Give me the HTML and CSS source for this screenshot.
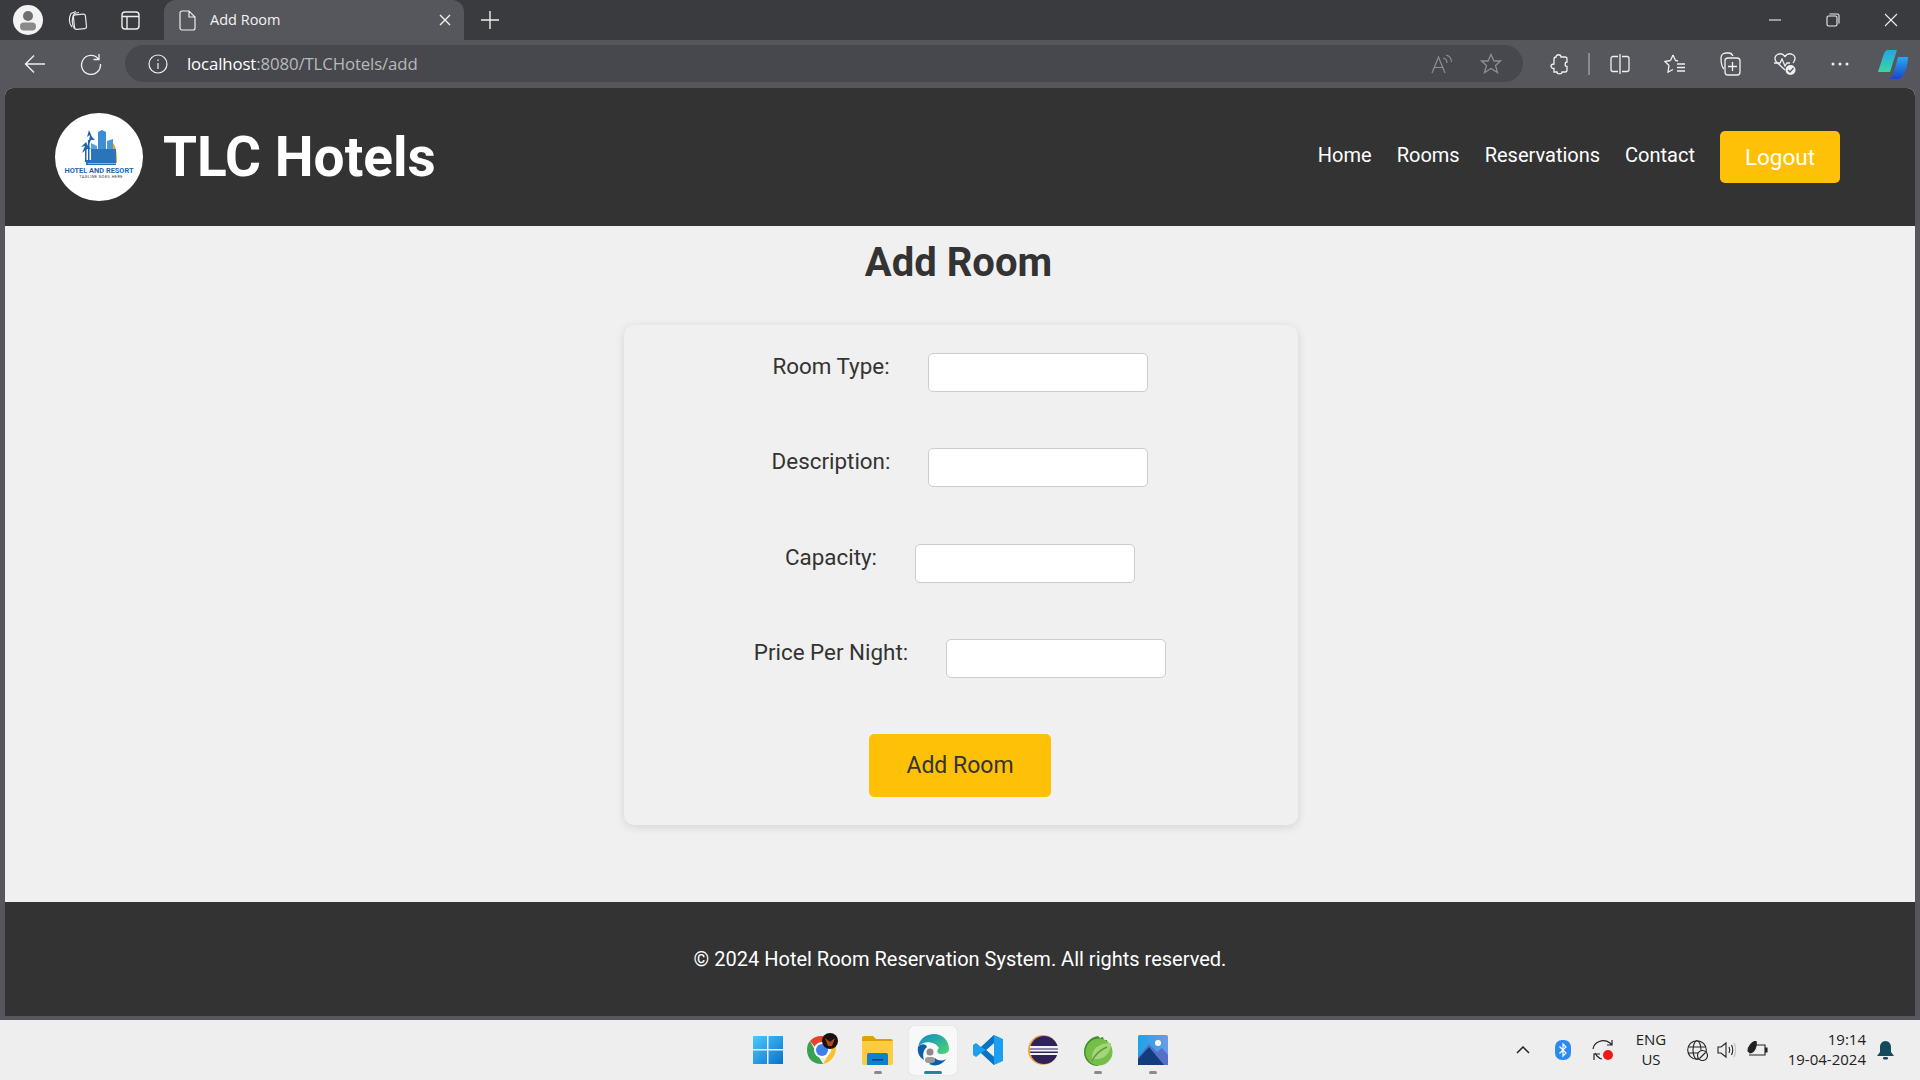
FILE: index.html
```html
<!DOCTYPE html>
<html lang="en">
<head>
<meta charset="utf-8">
<title>Add Room</title>
<link rel="stylesheet" href="styles.css">
</head>
<body>
<div class="tabbar">
  <div class="slot s-profile">
    <svg width="30" height="30" viewBox="0 0 30 30"><circle cx="15" cy="15" r="15" fill="#f3f3f3"/><circle cx="15" cy="11" r="5" fill="#6f6f6f"/><rect x="7" y="17.500" width="16" height="8" rx="4" fill="#8a8a8a"/></svg>
  </div>
  <div class="slot s-work">
    <svg width="22" height="22" viewBox="0 0 22 22" fill="none" stroke="#e6e6e6" stroke-width="1.200"><rect x="8" y="5.500" width="12" height="14.500" rx="2" transform="rotate(-6 14 13)"/><path d="M6 18C3 15 2.500 9 5 4.500L10 2.500"/><path d="M8.500 20C5.500 15 5.500 8 8.500 4.500L13 3.500"/></svg>
  </div>
  <div class="slot s-vert">
    <svg width="19" height="19" viewBox="0 0 19 19" fill="none" stroke="#ededed" stroke-width="1.400"><rect x="1" y="1" width="17" height="17" rx="3"/><path d="M1 5.500H18M6 5.500V18"/></svg>
  </div>
  <div class="tab">
    <svg class="tab-doc" width="17" height="21" viewBox="0 0 17 21" fill="none" stroke="#ededed" stroke-width="1.200"><path d="M3 1H10L16 7V18A2 2 0 0 1 14 20H3A2 2 0 0 1 1 18V3A2 2 0 0 1 3 1ZM10 1V7H16"/></svg>
    <span class="tab-title">Add Room</span>
    <svg width="12" height="12" viewBox="0 0 12 12" stroke="#f2f2f2" stroke-width="1.400"><path d="M1 1L11 11M11 1L1 11"/></svg>
  </div>
  <div class="slot s-plus">
    <svg width="18" height="18" viewBox="0 0 18 18" stroke="#f0f0f0" stroke-width="1.400"><path d="M9 0V18M0 9H18"/></svg>
  </div>
  <div class="winctl">
    <span class="winbtn"><svg width="14" height="14" viewBox="0 0 14 14" stroke="#eee" stroke-width="1.100"><path d="M1 7H13"/></svg></span>
    <span class="winbtn"><svg width="14" height="14" viewBox="0 0 14 14" fill="none" stroke="#eee" stroke-width="1.100"><rect x="1" y="3" width="10" height="10" rx="1.500"/><path d="M3.500 1H11.500A1.500 1.500 0 0 1 13 2.500V10.500"/></svg></span>
    <span class="winbtn"><svg width="14" height="14" viewBox="0 0 14 14" stroke="#eee" stroke-width="1.100"><path d="M1 1L13 13M13 1L1 13"/></svg></span>
  </div>
</div>

<div class="toolbar">
  <div class="slot t-back">
    <svg width="22" height="20" viewBox="0 0 22 20" fill="none" stroke="#f0f0f0" stroke-width="1.400"><path d="M21 10H1.500M10 1.500L1.500 10L10 18.500"/></svg>
  </div>
  <div class="slot t-reload">
    <svg width="22" height="22" viewBox="0 0 22 22" fill="none" stroke="#f0f0f0" stroke-width="1.300"><path d="M18.500 6A9.500 9.500 0 1 0 20.500 11"/><path d="M19 1V6.500H13.500"/></svg>
  </div>
  <div class="address">
    <svg class="addr-info" width="20" height="20" viewBox="0 0 20 20" fill="none" stroke="#f0f0f0" stroke-width="1.200"><circle cx="10" cy="10" r="9"/><path d="M10 9V15M10 5.500V7"/></svg>
    <span class="url"><span class="url-host">localhost</span>:8080/TLCHotels/add</span>
    <svg class="addr-read" width="24" height="20" viewBox="0 0 24 20" fill="none" stroke="#8d8e92" stroke-width="1.200"><path d="M2 19L8.500 3L15 19M4.500 13.500H12.500"/><path d="M13 4C15.500 4.500 17 6.500 17 9M16 1C19.500 2 21.500 4.500 21.500 8"/></svg>
    <svg class="addr-star" width="22" height="21" viewBox="0 0 22 21" fill="none" stroke="#8d8e92" stroke-width="1.300"><path d="M11 1.500L14 8H20.500L15.500 12.500L17.500 19.500L11 15.500L4.500 19.500L6.500 12.500L1.500 8H8Z"/></svg>
  </div>
  <div class="tools">
    <span class="tool"><svg width="20" height="22" viewBox="0 0 20 22" fill="none" stroke="#f0f0f0" stroke-width="1.300"><path d="M7 4C7 1 12 1 12 4H16C17 4 18 5 18 6V9C15.500 9 15.500 13.500 18 13.500V17C18 18 17 19 16 19H13C13 21.500 8 21.500 8 19H5V15.500C1 15.500 1 11 5 11V6.500C5 5 6 4 7 4Z"/></svg></span>
    <span class="tool-sep"></span>
    <span class="tool"><svg width="20" height="20" viewBox="0 0 20 20" fill="none" stroke="#f0f0f0" stroke-width="1.300"><path d="M8 2.500H3A2 2 0 0 0 1 4.500V15.500A2 2 0 0 0 3 17.500H8M12 2.500H17A2 2 0 0 1 19 4.500V15.500A2 2 0 0 1 17 17.500H12M10 0V20"/></svg></span>
    <span class="tool"><svg width="22" height="22" viewBox="0 0 22 22" fill="none" stroke="#f0f0f0" stroke-width="1.300"><path d="M9 2L11.500 7.500L14 8M6.500 7.500L1 8.500L5 12.500L4 19L9 16.500M9 2L6.500 7.500"/><path d="M13 11H21M13 14.500H21M13 18H21"/></svg></span>
    <span class="tool"><svg width="22" height="24" viewBox="0 0 22 24" fill="none" stroke="#f0f0f0" stroke-width="1.300"><path d="M5 17C3 15 2 10 2 6C2 3 4 1 7 1H10C12 1 13 2 14 4"/><rect x="6" y="6" width="15" height="17" rx="3"/><path d="M13.500 10V19M9 14.500H18"/></svg></span>
    <span class="tool"><svg width="24" height="24" viewBox="0 0 24 24" fill="none" stroke="#f0f0f0" stroke-width="1.300"><path d="M12 18L3 9.500C-1 3 8 -1 12 4.500C16 -1 25 3 21 9.500L20 11"/><path d="M1 11H7L9 7L12 14L14 11H17"/><circle cx="17.500" cy="18" r="5" fill="#f0f0f0" stroke="none"/><path d="M15 18L17 20L20.500 16" stroke="#56575c"/></svg></span>
    <span class="tool"><svg width="18" height="4" viewBox="0 0 18 4" fill="#f0f0f0"><circle cx="2" cy="2" r="1.500"/><circle cx="9" cy="2" r="1.500"/><circle cx="16" cy="2" r="1.500"/></svg></span>
    <span class="tool tool-cop"><svg width="32" height="32" viewBox="0 0 32 32"><defs><linearGradient id="cpa" x1="0" y1="0" x2="0" y2="1"><stop offset="0" stop-color="#1fa8e8"/><stop offset="1" stop-color="#3bd6a0"/></linearGradient><linearGradient id="cpb" x1="0" y1="0" x2="0" y2="1"><stop offset="0" stop-color="#29a8f2"/><stop offset="1" stop-color="#1a45d0"/></linearGradient></defs><path d="M11 2H20L13 24H1C1 24 2 20 4 15C6 9 7 2 11 2Z" fill="url(#cpa)"/><path d="M21 9H31C31 15 28 31 21 31H11C15 31 17 24 21 9Z" fill="url(#cpb)"/></svg></span>
  </div>
</div>

<div class="page">
  <header class="site-head">
    <div class="brand">
      <svg class="logo" width="88" height="88" viewBox="0 0 88 88">
        <circle cx="44" cy="44" r="44" fill="#fff"/>
        <path d="M58 30C61 33 62 40 62 50H58Z" fill="#f2a324"/>
        <path d="M43 19L47 17L51 19V48H43Z" fill="#3b8fd2"/>
        <path d="M52 28L58 26V48H52Z" fill="#4a97d6"/>
        <path d="M36 30L42 33V48H36Z" fill="#5aa0da"/>
        <path d="M36 36H61V52H31V47H36Z" fill="#2a74ba"/>
        <path d="M33 50H61V51H33Z" fill="#7fb3e0"/>
        <path d="M33 33L35 22L32 24L34 17L37 24L40 27L36 27ZM27 40L30 33L26 34L31 29L33 33L36 36L32 36Z" fill="#1d66ad"/>
        <rect x="33" y="27" width="1.500" height="22" fill="#1d66ad"/>
        <rect x="30" y="36" width="1.500" height="13" fill="#1d66ad"/>
        <text class="logo-t1" x="44" y="59.500">HOTEL AND RESORT</text>
        <text class="logo-t2" x="46" y="64.500">TAGLINE GOES HERE</text>
      </svg>
      <h1 class="site-title">TLC Hotels</h1>
    </div>
    <nav class="nav">
      <a class="nav-link">Home</a>
      <a class="nav-link">Rooms</a>
      <a class="nav-link">Reservations</a>
      <a class="nav-link">Contact</a>
      <button class="logout">Logout</button>
    </nav>
  </header>

  <main class="content">
    <h2 class="page-title">Add Room</h2>
    <form class="card">
      <div class="row"><label class="lbl">Room Type:</label><input class="field"></div>
      <div class="row"><label class="lbl">Description:</label><input class="field"></div>
      <div class="row"><label class="lbl">Capacity:</label><input class="field"></div>
      <div class="row"><label class="lbl">Price Per Night:</label><input class="field"></div>
      <button class="submit" type="button">Add Room</button>
    </form>
  </main>

  <footer class="site-foot">© 2024 Hotel Room Reservation System. All rights reserved.</footer>
</div>

<div class="taskbar">
  <div class="task-left"></div>
  <div class="task-apps">
    <span class="app"><svg width="30" height="30" viewBox="0 0 30 30"><defs><linearGradient id="wn" x1="0" y1="0" x2="1" y2="1"><stop offset="0" stop-color="#4cc9fb"/><stop offset="1" stop-color="#0672cf"/></linearGradient></defs><path d="M0 1H14V14H0ZM15.500 1H30V14H15.500ZM0 15.500H14V29H0ZM15.500 15.500H30V29H15.500Z" fill="url(#wn)"/></svg></span>
    <span class="app"><svg width="32" height="34" viewBox="0 0 32 34"><path d="M15 3A15 15 0 0 1 28 10H15A7 7 0 0 0 8 14L3 8A15 15 0 0 1 15 3Z" fill="#e4432f"/><path d="M3 8L9 19L16 31C7 32 0 26 0 17C0 13 1 10 3 8Z" fill="#34a352"/><path d="M28 10C31 17 27 29 16 31L22 21A7 7 0 0 0 22 10Z" fill="#fbc02d"/><circle cx="15" cy="17" r="8" fill="#fff"/><circle cx="15" cy="17" r="6" fill="#3f7fec"/><circle cx="23" cy="8" r="8" fill="#1a1210"/><path d="M18 5L23 9L28 5L25 13H21Z" fill="#b5471c"/></svg></span>
    <span class="app has-dot"><svg width="31" height="30" viewBox="0 0 31 30"><path d="M0 3A2 2 0 0 1 2 1H11L14 4H29A2 2 0 0 1 31 6V10H0Z" fill="#e0a100"/><path d="M0 6H31V28A2 2 0 0 1 29 30H2A2 2 0 0 1 0 28Z" fill="#fdcb3e"/><path d="M5 20A2 2 0 0 1 7 18H24A2 2 0 0 1 26 20V30H5Z" fill="#0d80d0"/><rect x="10" y="24" width="11" height="1.500" fill="#073e6e"/></svg></span>
    <span class="app active"><svg width="32" height="32" viewBox="0 0 32 32"><defs><linearGradient id="ed" x1="0" y1="0" x2="1" y2="1"><stop offset="0" stop-color="#0c8bd0"/><stop offset="1" stop-color="#4fd66a"/></linearGradient></defs><path d="M1 13C3 3 11 0 17 0C26 0 32 7 32 15C32 19 28 20 24 20C19 20 20 16 22 14C18 7 6 6 1 13Z" fill="url(#ed)"/><path d="M1 13C5 9 9 10 10 13C7 15 5 20 7 26C2 23 0 18 1 13Z" fill="#0b5fa8"/><path d="M12 30C18 33 25 31 29 25C24 28 20 26 18 24C16 27 14 29 12 30Z" fill="#0d5cad"/><circle cx="13" cy="18" r="3.500" fill="#8a8a8a"/><rect x="8" y="23" width="10" height="6" rx="3" fill="#9a9a9a"/></svg></span>
    <span class="app"><svg width="30" height="30" viewBox="0 0 30 30"><path d="M21 0L30 4V26L21 30L8 18L3 22L0 20V10L3 8L8 12ZM21 8L13 15L21 22Z" fill="#1d9ff0"/><path d="M21 0V8L13 15L8 12ZM8 18L13 15L21 22V30Z" fill="#0a74c2"/></svg></span>
    <span class="app"><svg width="30" height="30" viewBox="0 0 30 30"><circle cx="15" cy="15" r="15" fill="#f0a23a"/><circle cx="16" cy="15" r="14" fill="#2d2358"/><path d="M2 11H30V13.500H2ZM2 14.500H30V16.500H2ZM2 18H30V20H2Z" fill="#f2f2f7"/></svg></span>
    <span class="app has-dot"><svg width="30" height="32" viewBox="0 0 30 32"><path d="M15 2L17 4L20 3L21 6L24 6L24.500 9L27 10L15 32C7 32 1 26 1 18C1 10 7 3 15 2Z" fill="#3f8f2c"/><circle cx="16" cy="18" r="13.500" fill="#76bd4a"/><path d="M9 25C8 15 16 9 28 9C28 19 21 27 9 25Z" fill="#a4d57b"/><path d="M9 27C12 20 17 16 24 13" fill="none" stroke="#5f9e37" stroke-width="1.500"/></svg></span>
    <span class="app has-dot"><svg width="30" height="30" viewBox="0 0 30 30"><defs><linearGradient id="ph" x1="0" y1="0" x2="1" y2="0"><stop offset="0" stop-color="#1aa4e8"/><stop offset="1" stop-color="#6a9be8"/></linearGradient></defs><rect width="30" height="30" rx="1.500" fill="url(#ph)"/><circle cx="20" cy="8" r="3" fill="#fff"/><path d="M0 22L11 9L19 17L24 13L30 20V30H0Z" fill="#5670c8"/><path d="M0 24L11 12L26 30H0Z" fill="#123c7e"/></svg></span>
  </div>
  <div class="tray">
    <span class="tr tr-40"><svg width="14" height="8" viewBox="0 0 14 8" fill="none" stroke="#222" stroke-width="1.500"><path d="M1 7L7 1L13 7"/></svg></span>
    <span class="tr tr-40"><svg width="16" height="20" viewBox="0 0 16 20"><rect width="16" height="20" rx="7" fill="#2b8af0"/><path d="M4.500 6.500L11 13L8 16V4L11 7L4.500 13.500" fill="none" stroke="#fff" stroke-width="1.200"/></svg></span>
    <span class="tr tr-40"><svg width="22" height="22" viewBox="0 0 22 22" fill="none" stroke="#222" stroke-width="1.200"><path d="M1 10C2 3 11 -1 18 4L20 6M20 1V6H15M3 14L5 17C7 19 8 20 10 20M2 21V15H8"/><circle cx="16" cy="16" r="5" fill="#f01818" stroke="none"/></svg></span>
    <span class="tr lang">ENG<br>US</span>
    <span class="tr tr-30"><svg width="21" height="21" viewBox="0 0 21 21" fill="none" stroke="#222" stroke-width="1.100"><circle cx="10" cy="10" r="9.300"/><ellipse cx="10" cy="10" rx="4" ry="9.300"/><path d="M1 7H19M1 13H19"/><circle cx="15.500" cy="15.500" r="5" fill="#eee"/><path d="M12.500 18.500L18.500 12.500"/></svg></span>
    <span class="tr tr-30"><svg width="20" height="18" viewBox="0 0 20 18" fill="none" stroke="#222" stroke-width="1.100"><path d="M1 6H4L9 2V16L4 12H1Z"/><path d="M12 6C13 8 13 10 12 12M14.500 4C16 7 16 11 14.500 14"/><path d="M17 2C19 6 19 12 17 16" stroke="#bbb"/></svg></span>
    <span class="tr tr-32"><svg width="22" height="18" viewBox="0 0 22 18" fill="none" stroke="#222" stroke-width="1.100"><path d="M8 4H18V14H2"/><path d="M18 7H20V11H18" fill="#222"/><path d="M1 10C1 5 5 1 9 0C10 5 8 11 3 12Z" fill="#222"/></svg></span>
    <span class="clock">19:14<br>19-04-2024</span>
    <span class="tr tr-bell"><svg width="17" height="20" viewBox="0 0 17 20"><path d="M8.500 1C12 1 14 4 14 7V12L17 16H0L3 12V7C3 4 5 1 8.500 1Z" fill="#134b5c"/><rect x="6" y="17" width="5" height="2.500" rx="1.200" fill="#134b5c"/></svg></span>
  </div>
</div>
</body>
</html>
```

FILE: styles.css
```css
* { box-sizing: border-box; }
html, body { margin: 0; height: 100%; }
body {
  width: 1920px;
  height: 1080px;
  overflow: hidden;
  display: flex;
  flex-direction: column;
  background: #56575c;
  font-family: Roboto, "Liberation Sans", sans-serif;
}
.slot { display: flex; align-items: center; justify-content: center; flex: none; }

.tabbar { height: 40px; flex: none; display: flex; align-items: center; background: #3a3b3f; }
.s-profile { width: 56px; }
.s-work { width: 50px; margin-left: -4px; }
.s-vert { width: 62px; padding-right: 6px; }
.tab {
  width: 300px; height: 40px; padding: 0 13px 0 15px;
  display: flex; align-items: center; background: #56575c;
  border-radius: 12px 12px 0 0; color: #f2f2f2;
}
.tab-doc { margin-right: 14px; }
.tab-title { flex: 1; font: 14.500px "Open Sans", sans-serif; margin-top: -1px; }
.s-plus { width: 52px; }
.winctl { margin-left: auto; display: flex; }
.winbtn { width: 58px; height: 40px; display: flex; align-items: center; justify-content: center; }

.toolbar { height: 48px; flex: none; display: flex; align-items: center; background: #56575c; }
.t-back { width: 56px; margin-left: 7px; }
.t-reload { width: 56px; }
.address {
  width: 1400px; height: 37px; margin-left: 6px; margin-top: -1px; padding: 0 21px 0 23px;
  display: flex; align-items: center; background: #47484d; border-radius: 19px;
}
.addr-info { flex: none; margin-right: 19px; }
.url { flex: 1; font: 16.800px "Open Sans", sans-serif; color: #b8b9bc; letter-spacing: -.12px; margin-top: -1px; }
.url-host { color: #fff; }
.addr-read { margin-right: 26px; }
.tools { display: flex; align-items: center; margin-left: 8px; }
.tool { width: 55px; display: flex; align-items: center; justify-content: center; }
.tool-sep { width: 2px; height: 22px; background: #8a8b8f; margin: 0 2px; }
.tool-cop { margin-left: -2px; }

.page {
  margin: 0 5px; height: 928px; flex: none; display: flex; flex-direction: column;
  background: #f0f0f0; border-radius: 8px 8px 0 0; overflow: hidden;
}
.site-head {
  height: 138px; flex: none; display: flex; align-items: center; justify-content: space-between;
  padding: 0 75px 0 50px; background: #333; color: #fff;
}
.brand { display: flex; align-items: center; gap: 20px; }
.logo { display: block; }
.logo-t1 { font: 700 7.400px Roboto, sans-serif; fill: #1d66ad; text-anchor: middle; }
.logo-t2 { font: 3.800px Roboto, sans-serif; fill: #333; text-anchor: middle; letter-spacing: .45px; }
.site-title { margin: 0; font: 700 55px Roboto, sans-serif; }
.nav { display: flex; align-items: center; gap: 25px; }
.nav-link { font-size: 20px; color: #fff; margin-top: -5px; }
.logout {
  width: 120px; height: 52px; border: 0; border-radius: 5px; background: #ffc107;
  color: #fff; font: 22.500px Roboto, sans-serif;
}

.content { flex: 1; display: flex; flex-direction: column; align-items: center; }
.page-title { margin: 13px 3px 0 0; font: 700 40px/47px Roboto, sans-serif; color: #333; }
.card {
  width: 674px; height: 500px; margin: 39px 0 0 1px; padding: 28px 0 0;
  display: flex; flex-direction: column; align-items: center;
  background: #f0f0f0; border-radius: 10px; box-shadow: 0 2px 10px rgba(0,0,0,.12);
}
.row { height: 95.300px; flex: none; display: flex; align-items: flex-start; justify-content: center; gap: 37px; }
.lbl { font-size: 22.400px; line-height: 26px; margin: 0 1px 0 -1px; color: #333; }
.field { width: 220px; height: 39px; border: 1px solid #ccc; border-radius: 5px; background: #fff; }
.submit {
  width: 182px; height: 63px; margin-right: 1px; border: 0; border-radius: 5px;
  background: #ffc107; color: #333; font: 23px Roboto, sans-serif;
}

.site-foot {
  height: 114px; flex: none; display: flex; align-items: center; justify-content: center;
  background: #333; color: #fff; font-size: 20px;
}

.taskbar {
  flex: none; height: 60px; margin-top: 4px; display: grid; grid-template-columns: 1fr auto 1fr;
  align-items: center; background: #eee;
}
.task-apps { display: flex; }
.app {
  position: relative; width: 48px; height: 49px; margin: 0 3.500px;
  display: flex; align-items: center; justify-content: center; border-radius: 5px;
}
.app.active { background: #f8f8f8; box-shadow: 0 0 1px rgba(0,0,0,.2); }
.app.has-dot::after, .app.active::after {
  content: ""; position: absolute; bottom: 1px; left: 50%; height: 3px; border-radius: 2px;
}
.app.has-dot::after { width: 8px; margin-left: -4px; background: #8a8a8a; }
.app.active::after { width: 18px; margin-left: -9px; background: #23859a; }
.tray { display: flex; align-items: center; justify-content: flex-end; padding-right: 16px; height: 60px; }
.tr { display: flex; align-items: center; justify-content: center; flex: none; }
.tr-40 { width: 40px; }
.tr-30 { width: 30px; }
.tr-32 { width: 32px; }
.tr-bell { width: 38px; }
.lang, .clock { display: block; font: 15px/20px "Open Sans", sans-serif; color: #222; margin-top: -2px; }
.lang { width: 56px; text-align: center; margin-right: 3px; }
.clock { width: 92px; text-align: right; }
```
